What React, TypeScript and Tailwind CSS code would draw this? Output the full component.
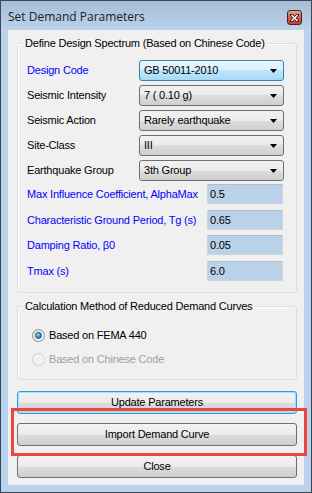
import React from 'react';

type ComboRow = { label: string; value: string; blue?: boolean; focused?: boolean };
type ValueRow = { label: string; value: string; gap: string };

const combos: ComboRow[] = [
  { label: 'Design Code', value: 'GB 50011-2010', blue: true, focused: true },
  { label: 'Seismic Intensity', value: '7 ( 0.10 g)' },
  { label: 'Seismic Action', value: 'Rarely earthquake' },
  { label: 'Site-Class', value: 'III' },
  { label: 'Earthquake Group', value: '3th Group' },
];

const values: ValueRow[] = [
  { label: 'Max Influence Coefficient, AlphaMax', value: '0.5', gap: 'mt-[3px]' },
  { label: 'Characteristic Ground Period, Tg (s)', value: '0.65', gap: 'mt-[6px]' },
  { label: 'Damping Ratio, β0', value: '0.05', gap: 'mt-[5px]' },
  { label: 'Tmax (s)', value: '6.0', gap: 'mt-[6px]' },
];

const ComboBox: React.FC<{ value: string; focused?: boolean }> = ({ value, focused }) => (
  <div
    className={`w-[145px] h-[21px] rounded-[3px] border flex items-center pl-[4px] pr-[6px] ${
      focused
        ? 'border-[#3c7fb1] bg-[linear-gradient(#eaf6fd,#d9f0fc_50%,#bee6fd_50%,#a7d9f5)]'
        : 'border-[#707070] bg-[linear-gradient(#f2f2f2,#ebebeb_50%,#dddddd_50%,#cfcfcf)]'
    }`}
  >
    <span className="flex-1">{value}</span>
    <svg width="7" height="4" viewBox="0 0 7 4">
      <polygon points="0,0 7,0 3.5,4" fill="#000" />
    </svg>
  </div>
);

const Radio: React.FC<{ checked?: boolean; disabled?: boolean }> = ({ checked, disabled }) => (
  <span
    className={`w-[13px] h-[13px] rounded-full border flex items-center justify-center ${
      disabled
        ? 'border-[#cdcdcd] bg-[#f3f3f3]'
        : 'border-[#8e8f8f] bg-[linear-gradient(135deg,#d6d6d6,#ffffff)]'
    }`}
  >
    {checked && (
      <span className="w-[7px] h-[7px] rounded-full border border-[#1b5a8f] bg-[radial-gradient(circle_at_40%_35%,#8fe0ff,#2a8bd0_55%,#114f86)]" />
    )}
  </span>
);

const Button: React.FC<{ children: React.ReactNode; focused?: boolean }> = ({ children, focused }) => (
  <div
    className={`h-[23px] rounded-[3px] border flex items-center justify-center ${
      focused
        ? 'border-[#3399dd] shadow-[inset_0_0_0_1px_#9be3fc] bg-[linear-gradient(#f2f2f2,#ebebeb_50%,#dddddd_50%,#cfcfcf)]'
        : 'border-[#707070] bg-[linear-gradient(#f2f2f2,#ebebeb_50%,#dddddd_50%,#cfcfcf)]'
    }`}
  >
    {children}
  </div>
);

export default function App() {
  return (
    <div className="relative w-[312px] h-[493px] border border-[#3a4856] bg-[#bad2eb] flex flex-col font-['Liberation_Sans',Arial,sans-serif] text-[11px] tracking-[-0.2px] text-black">
      {/* title bar */}
      <div className="h-[29px] flex items-start bg-[linear-gradient(#a6bdd5,#bad2eb)]">
        <span className="ml-[7px] mt-[8px] leading-[16px] text-[12px] tracking-normal font-['Open_Sans',sans-serif] text-[#1e1e1e]">
          Set Demand Parameters
        </span>
        <div className="ml-auto mr-[9px] mt-[9px] w-[15px] h-[15px] rounded-[3px] border border-[#5a1f1a] bg-[linear-gradient(#dca79b,#c7604e_50%,#b8412e)] flex items-center justify-center">
          <svg width="9" height="8" viewBox="0 0 9 8">
            <path d="M1.5 1 L7.5 7 M7.5 1 L1.5 7" stroke="#3a1410" strokeWidth="3" strokeLinecap="square" />
            <path d="M1.5 1 L7.5 7 M7.5 1 L1.5 7" stroke="#ffffff" strokeWidth="1.5" />
          </svg>
        </div>
      </div>

      {/* client area */}
      <div className="mx-[7px] mb-[7px] flex-1 bg-[#f0f0f0] pl-[9px] pr-[7px] pt-[13px] flex flex-col">
        {/* design spectrum group */}
        <div className="relative h-[250px] rounded-[3px] border border-[#d5dfe5] shadow-[inset_1px_1px_0_#ffffff] pl-[9px] pt-[16px] flex flex-col">
          <span className="absolute left-[5px] top-[-7px] px-[2px] leading-[13px] bg-[#f0f0f0]">
            Define Design Spectrum (Based on Chinese Code)
          </span>
          <div className="flex flex-col gap-[4px] pr-[12px]">
            {combos.map((c) => (
              <div key={c.label} className="flex items-center">
                <span className={`flex-1 ${c.blue ? 'text-[#0000ff]' : ''}`}>{c.label}</span>
                <ComboBox value={c.value} focused={c.focused} />
              </div>
            ))}
          </div>
          {values.map((v) => (
            <div key={v.label} className={`flex items-center pr-[13px] ${v.gap}`}>
              <span className="flex-1 text-[#0000ff]">{v.label}</span>
              <div className="w-[76px] h-[20px] border border-[#cfd4da] border-t-[#b9bdc2] bg-[#bad1ea] flex items-center pl-[2px]">
                {v.value}
              </div>
            </div>
          ))}
        </div>

        {/* reduced demand curves group */}
        <div className="relative mt-[13px] h-[74px] rounded-[3px] border border-[#d5dfe5] shadow-[inset_1px_1px_0_#ffffff] pl-[14px] pt-[22px] flex flex-col gap-[11px]">
          <span className="absolute left-[5px] top-[-7px] px-[2px] leading-[13px] bg-[#f0f0f0]">
            Calculation Method of Reduced Demand Curves
          </span>
          <div className="h-[13px] flex items-center gap-[4px]">
            <Radio checked />
            <span>Based on FEMA 440</span>
          </div>
          <div className="h-[13px] flex items-center gap-[4px] text-[#a0a0a0]">
            <Radio disabled />
            <span>Based on Chinese Code</span>
          </div>
        </div>

        {/* buttons */}
        <div className="mt-[11px] flex flex-col gap-[9px]">
          <Button focused>Update Parameters</Button>
          <Button>Import Demand Curve</Button>
          <Button>Close</Button>
        </div>
      </div>

      {/* red highlight annotation */}
      <div className="absolute left-[10px] top-[407px] w-[296px] h-[48px] border-[3px] border-[#e8473f]" />
    </div>
  );
}
